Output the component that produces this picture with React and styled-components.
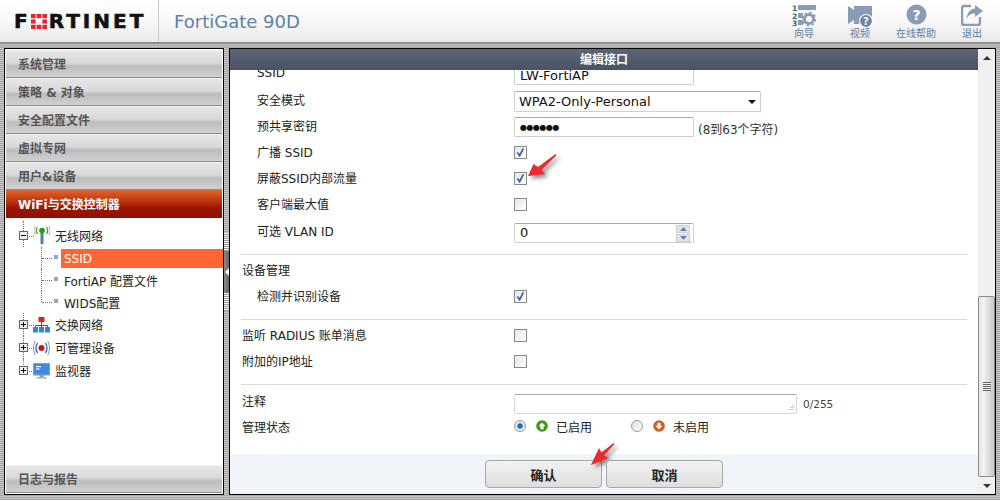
// App.jsx
import React from 'react';
import styled, { createGlobalStyle } from 'styled-components';

const GlobalStyle = createGlobalStyle`
  html, body {
    margin: 0;
    padding: 0;
    height: 500px;
    overflow: hidden;
    font-family: "DejaVu Sans", "Noto Sans CJK SC", sans-serif;
    font-size: 12px;
    color: #222;
  }
  * { box-sizing: border-box; }
`;

const NAV_ITEMS = ['系统管理', '策略 & 对象', '安全配置文件', '虚拟专网', '用户&设备'];

function WizardIcon() {
  return (
    <svg width="24" height="23" viewBox="0 0 24 23">
      <text x="0" y="7" fontSize="7.5" fontWeight="700" fill="#3f5f8c">1</text>
      <text x="0" y="14.5" fontSize="7.5" fontWeight="700" fill="#3f5f8c">2</text>
      <text x="0" y="22" fontSize="7.5" fontWeight="700" fill="#3f5f8c">3</text>
      <rect x="6" y="1" width="18" height="5" fill="#8b9bb6" />
      <rect x="6" y="9" width="5" height="5" fill="#8b9bb6" />
      <rect x="6" y="16" width="5" height="5" fill="#8b9bb6" />
      <circle cx="17" cy="15" r="4.6" fill="none" stroke="#8b9bb6" strokeWidth="3" />
      <circle cx="17" cy="15" r="6.6" fill="none" stroke="#8b9bb6" strokeWidth="1.6" strokeDasharray="2.4 2.8" />
    </svg>
  );
}

function VideoIcon() {
  return (
    <svg width="25" height="24" viewBox="0 0 25 24">
      <path d="M0 2 L6 6 V2 H24 V14 H6 V16 L0 20 Z" fill="#8b9bb6" />
      <path d="M6 14 h8 v6 h-8 Z" fill="#8b9bb6" />
      <circle cx="18" cy="17" r="6.5" fill="#6f83a3" stroke="#fff" strokeWidth="1.2" />
      <text x="18" y="21" textAnchor="middle" fontSize="10" fontWeight="700" fill="#fff">?</text>
    </svg>
  );
}

function HelpIcon() {
  return (
    <svg width="21" height="21" viewBox="0 0 21 21">
      <circle cx="10.5" cy="10.5" r="10" fill="#8b9bb6" />
      <text x="10.5" y="15.5" textAnchor="middle" fontSize="14" fontWeight="700" fill="#fff">?</text>
    </svg>
  );
}

function ExitIcon() {
  return (
    <svg width="22" height="22" viewBox="0 0 22 22">
      <path d="M10 2 H3 Q1 2 1 4 V19 Q1 21 3 21 H17 Q19 21 19 19 V13" fill="none" stroke="#8b9bb6" strokeWidth="2.4" />
      <path d="M14 1 L22 7 L14 13 V9.5 C10 9.5 7.5 11 5.5 15 C6 9 9 5 14 4.5 Z" fill="#8b9bb6" />
    </svg>
  );
}

function WifiIcon() {
  return (
    <svg width="16" height="18" viewBox="0 0 16 18">
      <rect x="6.5" y="7" width="3" height="11" fill="#4d7db0" />
      <circle cx="8" cy="4.5" r="2.8" fill="#1f9d1f" />
      <path d="M3.5 1 Q1 4.5 3.5 8 M12.5 1 Q15 4.5 12.5 8" fill="none" stroke="#5b7a2a" strokeWidth="1.1" />
      <path d="M1 0 Q-1.2 4.5 1 9 M15 0 Q17.2 4.5 15 9" fill="none" stroke="#9aa86a" strokeWidth="0.8" />
    </svg>
  );
}

function SwitchIcon() {
  return (
    <svg width="17" height="16" viewBox="0 0 17 16">
      <rect x="5.5" y="0" width="6" height="5" fill="#e02020" />
      <path d="M8.5 5 V9 M2.5 11 V8.5 H14.5 V11 M8.5 9 V11" fill="none" stroke="#555" />
      <rect x="0" y="10" width="5" height="5.5" fill="#2f86d8" />
      <rect x="6" y="10" width="5" height="5.5" fill="#2f86d8" />
      <rect x="12" y="10" width="5" height="5.5" fill="#2f86d8" />
    </svg>
  );
}

function ManagedIcon() {
  return (
    <svg width="17" height="16" viewBox="0 0 17 16">
      <circle cx="8.5" cy="8" r="3" fill="#d01020" />
      <path d="M4.5 3 Q1.5 8 4.5 13 M12.5 3 Q15.5 8 12.5 13" fill="none" stroke="#2a62b0" strokeWidth="1.3" />
      <path d="M2.2 1 Q-1.2 8 2.2 15 M14.8 1 Q18.2 8 14.8 15" fill="none" stroke="#6f9ad0" strokeWidth="1" />
    </svg>
  );
}

function MonitorIcon() {
  return (
    <svg width="17" height="16" viewBox="0 0 17 16">
      <rect x="0.5" y="0.5" width="16" height="11.5" fill="#3f8ae8" stroke="#8aa0b8" />
      <rect x="3" y="3" width="5" height="1.2" fill="#fff" />
      <rect x="3" y="5.4" width="3.4" height="1.2" fill="#fff" />
      <rect x="6.5" y="12" width="4" height="2" fill="#8a98a8" />
      <rect x="3.5" y="14" width="10" height="1.6" fill="#a9b4c0" />
    </svg>
  );
}

function UpCircle() {
  return (
    <svg width="12" height="12" viewBox="0 0 12 12">
      <circle cx="6" cy="6" r="5.8" fill="#3a9a12" />
      <path d="M6 2.4 L9.6 6.2 H7.6 V9.2 H4.4 V6.2 H2.4 Z" fill="#fff" />
    </svg>
  );
}

function DownCircle() {
  return (
    <svg width="12" height="12" viewBox="0 0 12 12">
      <circle cx="6" cy="6" r="5.8" fill="#e2551a" />
      <path d="M6 9.6 L9.6 5.8 H7.6 V2.8 H4.4 V5.8 H2.4 Z" fill="#fff" />
    </svg>
  );
}

function CheckMark() {
  return (
    <svg width="11" height="11" viewBox="0 0 11 11">
      <path d="M2.4 5.6 L4.6 8.6 L8.4 1.4" fill="none" stroke="#3a5aa0" strokeWidth="1.7" />
    </svg>
  );
}

function App() {
  return (
    <>
      <GlobalStyle />
      <Page>
        <Header>
          <LogoCell>
            <Logo>
              F
              <LogoMark viewBox="0 0 16 15">
                <rect x="0" y="0" width="4.6" height="4.2" fill="#e8262a" />
                <rect x="5.6" y="0" width="4.8" height="4.2" fill="#e8262a" />
                <rect x="11.4" y="0" width="4.6" height="4.2" fill="#e8262a" />
                <rect x="0" y="5.4" width="4.6" height="4.2" fill="#e8262a" />
                <rect x="11.4" y="5.4" width="4.6" height="4.2" fill="#e8262a" />
                <rect x="0" y="10.8" width="4.6" height="4.2" fill="#e8262a" />
                <rect x="5.6" y="10.8" width="4.8" height="4.2" fill="#e8262a" />
                <rect x="11.4" y="10.8" width="4.6" height="4.2" fill="#e8262a" />
              </LogoMark>
              RTINET
            </Logo>
          </LogoCell>
          <ModelName>FortiGate 90D</ModelName>
          <HeaderTools>
            <ToolItem><ToolIcon><WizardIcon /></ToolIcon>向导</ToolItem>
            <ToolItem><ToolIcon><VideoIcon /></ToolIcon>视频</ToolItem>
            <ToolItem><ToolIcon><HelpIcon /></ToolIcon>在线帮助</ToolItem>
            <ToolItem><ToolIcon><ExitIcon /></ToolIcon>退出</ToolItem>
          </HeaderTools>
        </Header>
        <Main>
          <SidePanel>
            {NAV_ITEMS.map((item) => (
              <NavItem key={item}>{item}</NavItem>
            ))}
            <NavActive>WiFi与交换控制器</NavActive>
            <Tree>
              <TreeRow $first>
                <Expander $open />
                <TreeIcon><WifiIcon /></TreeIcon>
                <TreeLabel>无线网络</TreeLabel>
              </TreeRow>
              <ChildRow>
                <Bullet />
                <ChildLabel $active>SSID</ChildLabel>
              </ChildRow>
              <ChildRow>
                <Bullet />
                <ChildLabel>FortiAP 配置文件</ChildLabel>
              </ChildRow>
              <ChildRow $last>
                <Bullet />
                <ChildLabel>WIDS配置</ChildLabel>
              </ChildRow>
              <TreeRow>
                <Expander />
                <TreeIcon><SwitchIcon /></TreeIcon>
                <TreeLabel>交换网络</TreeLabel>
              </TreeRow>
              <TreeRow>
                <Expander />
                <TreeIcon><ManagedIcon /></TreeIcon>
                <TreeLabel>可管理设备</TreeLabel>
              </TreeRow>
              <TreeRow $lastRoot>
                <Expander />
                <TreeIcon><MonitorIcon /></TreeIcon>
                <TreeLabel>监视器</TreeLabel>
              </TreeRow>
            </Tree>
            <NavItem $bottom>日志与报告</NavItem>
          </SidePanel>
          <Splitter>
            <SplitGrip />
            <SplitHandle>
              <svg width="4" height="8" viewBox="0 0 4 8"><path d="M4 0 V8 L0 4 Z" fill="#fff" /></svg>
            </SplitHandle>
            <SplitGrip />
          </Splitter>
          <Dialog>
            <DialogMain>
              <DialogTitle>编辑接口</DialogTitle>
              <FormBody>
                <FormInner>
                  <Row $indent>
                    <RowLabel $indent>SSID</RowLabel>
                    <TextBox>LW-FortiAP</TextBox>
                  </Row>
                  <Row $indent>
                    <RowLabel $indent>安全模式</RowLabel>
                    <SelectBox>
                      WPA2-Only-Personal
                      <svg width="8" height="4" viewBox="0 0 8 4"><path d="M0 0 H8 L4 4 Z" fill="#111" /></svg>
                    </SelectBox>
                  </Row>
                  <Row $indent>
                    <RowLabel $indent>预共享密钥</RowLabel>
                    <TextBox $dots>●●●●●●</TextBox>
                    <Hint>(8到63个字符)</Hint>
                  </Row>
                  <Row $indent>
                    <RowLabel $indent>广播 SSID</RowLabel>
                    <CheckBox><CheckMark /></CheckBox>
                  </Row>
                  <Row $indent>
                    <RowLabel $indent>屏蔽SSID内部流量</RowLabel>
                    <CheckBox><CheckMark /></CheckBox>
                    <ArrowOne width="30" height="24" viewBox="0 0 30 24">
                      <path d="M0 22 L5.5 10 L10 13 L27.5 0 L28.5 1 L13.5 16 L17 20 Z" fill="#f0282c" />
                    </ArrowOne>
                  </Row>
                  <Row $indent>
                    <RowLabel $indent>客户端最大值</RowLabel>
                    <CheckBox />
                  </Row>
                  <Row $indent $gap={1}>
                    <RowLabel $indent>可选 VLAN ID</RowLabel>
                    <TextBox $drop={5}>
                      0
                      <Spinner>
                        <SpinBtn><svg width="7" height="4" viewBox="0 0 7 4"><path d="M0 4 L3.5 0 L7 4 Z" fill="#6a7fb0" /></svg></SpinBtn>
                        <SpinBtn><svg width="7" height="4" viewBox="0 0 7 4"><path d="M0 0 H7 L3.5 4 Z" fill="#6a7fb0" /></svg></SpinBtn>
                      </Spinner>
                    </TextBox>
                  </Row>
                  <Divider $top={11} $bottom={1} />
                  <Row>
                    <RowLabel>设备管理</RowLabel>
                  </Row>
                  <Row $indent>
                    <RowLabel $indent>检测并识别设备</RowLabel>
                    <CheckBox><CheckMark /></CheckBox>
                  </Row>
                  <Divider $top={11} $bottom={1} />
                  <Row>
                    <RowLabel>监听 RADIUS 账单消息</RowLabel>
                    <CheckBox />
                  </Row>
                  <Row>
                    <RowLabel>附加的IP地址</RowLabel>
                    <CheckBox />
                  </Row>
                  <Divider $top={11} $bottom={2} />
                  <Row>
                    <RowLabel>注释</RowLabel>
                    <NoteBox>
                      <svg width="7" height="7" viewBox="0 0 7 7">
                        <path d="M6 1v1M4 3v1M6 3v1M2 5v1M4 5v1M6 5v1" stroke="#999" />
                      </svg>
                    </NoteBox>
                    <Counter>0/255</Counter>
                  </Row>
                  <Row>
                    <RowLabel>管理状态</RowLabel>
                    <RadioOption $width={117}>
                      <Radio $on />
                      <UpCircle />
                      <span>已启用</span>
                    </RadioOption>
                    <RadioOption>
                      <Radio />
                      <DownCircle />
                      <span>未启用</span>
                    </RadioOption>
                  </Row>
                </FormInner>
              </FormBody>
              <Footer>
                <FooterButton>
                  确认
                  <ArrowTwo width="25" height="24" viewBox="0 0 25 24">
                    <path d="M0 22 L8 5 L10.5 9.5 L22.5 0 L23.5 1 L13 12.5 L17.5 15 Z" fill="#f0282c" />
                  </ArrowTwo>
                </FooterButton>
                <FooterButton>取消</FooterButton>
              </Footer>
            </DialogMain>
            <ScrollBar>
              <ScrollEnd>
                <svg width="8" height="4" viewBox="0 0 8 4"><path d="M0 4 L4 0 L8 4 Z" fill="#333" /></svg>
              </ScrollEnd>
              <ScrollTrack>
                <ScrollThumb>
                  <ThumbGrip />
                </ScrollThumb>
              </ScrollTrack>
              <ScrollEnd>
                <svg width="8" height="4" viewBox="0 0 8 4"><path d="M0 0 H8 L4 4 Z" fill="#333" /></svg>
              </ScrollEnd>
            </ScrollBar>
          </Dialog>
        </Main>
      </Page>
    </>
  );
}

const Page = styled.div`
  width: 1000px;
  height: 500px;
  display: flex;
  flex-direction: column;
  background: repeating-linear-gradient(to bottom, #c4c4c4 0, #c4c4c4 1px, #a8a8a8 1px, #a8a8a8 2px);
`;

const Header = styled.div`
  height: 44px;
  display: flex;
  align-items: stretch;
  background: linear-gradient(to bottom, #ffffff 0%, #f8f8f8 50%, #e9e9e9 100%);
  border-bottom: 2px solid #8d8d8d;
`;

const LogoCell = styled.div`
  width: 159px;
  padding-left: 14px;
  display: flex;
  align-items: center;
  border-right: 1px solid #c8c8c8;
`;

const Logo = styled.div`
  display: flex;
  align-items: center;
  font-family: "DejaVu Sans", sans-serif;
  font-weight: 700;
  font-size: 20px;
  letter-spacing: 3px;
  -webkit-text-stroke: 0.6px #111;
  color: #111;
  line-height: 16px;
`;

const LogoMark = styled.svg`
  width: 16px;
  height: 15px;
  margin-right: 2px;
`;

const ModelName = styled.div`
  padding-left: 15px;
  display: flex;
  align-items: center;
  font-size: 18px;
  color: #5c83ab;
`;

const HeaderTools = styled.div`
  margin-left: auto;
  display: flex;
`;

const ToolItem = styled.div`
  width: 56px;
  display: flex;
  flex-direction: column;
  align-items: center;
  font-size: 10px;
  line-height: 13px;
  color: #5c7fa8;
`;

const ToolIcon = styled.div`
  height: 27px;
  padding-top: 4px;
  display: flex;
  align-items: flex-start;
  justify-content: center;
`;

const Main = styled.div`
  flex: 1;
  min-height: 0;
  display: flex;
  padding: 4px 4px 5px 4px;
`;

const SidePanel = styled.div`
  width: 220px;
  display: flex;
  flex-direction: column;
  background: #fff;
  border: 1px solid #000;
`;

const NavItem = styled.div`
  height: 28px;
  padding: 0 0 2px 12px;
  display: flex;
  align-items: center;
  flex-shrink: 0;
  font-size: 12px;
  font-weight: 700;
  color: #555;
  background: linear-gradient(to bottom, #e6e6e6 0%, #d9d9d9 45%, #bdbdbd 58%, #d0d0d0 100%);
  border-bottom: 1px solid #8c8c8c;
  border-top: 1px solid #f0f0f0;
  margin: ${(p) => (p.$bottom ? 'auto 1px 1px' : '0 1px')};

  &:first-child {
    margin-top: 1px;
  }
`;

const NavActive = styled.div`
  height: 28px;
  margin: 0 1px;
  padding: 0 0 2px 12px;
  display: flex;
  align-items: center;
  flex-shrink: 0;
  font-size: 12px;
  font-weight: 700;
  color: #fff;
  background: linear-gradient(to bottom, #e0652e 0%, #c23a12 35%, #9c1500 65%, #8c1000 100%);
`;

const Tree = styled.div`
  padding-top: 6px;
  display: flex;
  flex-direction: column;
`;

const TreeRow = styled.div`
  position: relative;
  height: 23px;
  padding: ${(p) => (p.$first ? '0 0 1px 14px' : '0 0 0 14px')};
  display: flex;
  align-items: center;

  &::before {
    content: '';
    position: absolute;
    left: 18px;
    top: ${(p) => (p.$first ? '-3px' : '0')};
    bottom: ${(p) => (p.$lastRoot ? '50%' : '0')};
    border-left: 1px dotted #777;
  }

  &::after {
    content: '';
    position: absolute;
    left: 24px;
    top: 50%;
    width: 5px;
    border-top: 1px dotted #777;
  }
`;

const Expander = styled.span`
  position: relative;
  z-index: 1;
  width: 9px;
  height: 9px;
  flex-shrink: 0;
  border: 1px solid #666;
  background: #eee;

  &::before {
    content: '';
    position: absolute;
    left: 1px;
    top: 3px;
    width: 5px;
    height: 1px;
    background: #111;
  }

  &::after {
    content: '';
    display: ${(p) => (p.$open ? 'none' : 'block')};
    position: absolute;
    left: 3px;
    top: 1px;
    width: 1px;
    height: 5px;
    background: #111;
  }
`;

const TreeIcon = styled.span`
  width: 17px;
  height: 18px;
  margin-left: 5px;
  display: flex;
  align-items: center;
  justify-content: center;
`;

const TreeLabel = styled.span`
  margin-left: 5px;
  font-size: 12px;
  color: #222;
`;

const ChildRow = styled.div`
  position: relative;
  height: 22px;
  padding-left: 49px;
  display: flex;
  align-items: center;

  &::before {
    content: '';
    position: absolute;
    left: 36px;
    top: 0;
    height: ${(p) => (p.$last ? '50%' : '100%')};
    border-left: 1px dotted #777;
  }

  &::after {
    content: '';
    position: absolute;
    left: 37px;
    top: 50%;
    width: 10px;
    border-top: 1px dotted #777;
  }
`;

const Bullet = styled.span`
  width: 4px;
  height: 4px;
  margin-top: -3px;
  background: #9aa3bb;
  flex-shrink: 0;
`;

const ChildLabel = styled.span`
  margin: 1px 0 0 3px;
  flex: 1;
  height: 19px;
  padding-left: 3px;
  display: flex;
  align-items: center;
  font-size: 12px;
  color: ${(p) => (p.$active ? '#fff' : '#222')};
  background: ${(p) => (p.$active ? '#ff6633' : 'transparent')};
`;

const Splitter = styled.div`
  width: 5px;
  display: flex;
  flex-direction: column;
  justify-content: center;
  align-items: center;
`;

const SplitGrip = styled.div`
  width: 5px;
  height: 18px;
  background: repeating-linear-gradient(to bottom, #f4f4f4 0, #f4f4f4 1px, #999 1px, #999 2px);
`;

const SplitHandle = styled.div`
  width: 5px;
  height: 42px;
  background: linear-gradient(to right, #8a8a8a, #666);
  display: flex;
  align-items: center;
  justify-content: center;
`;

const Dialog = styled.div`
  flex: 1;
  min-width: 0;
  display: flex;
  background: #fff;
  border: 1px solid #000;
`;

const DialogMain = styled.div`
  flex: 1;
  min-width: 0;
  display: flex;
  flex-direction: column;
`;

const DialogTitle = styled.div`
  height: 21px;
  flex-shrink: 0;
  padding-bottom: 2px;
  display: flex;
  align-items: center;
  justify-content: center;
  font-size: 12px;
  font-weight: 700;
  color: #fff;
  background: linear-gradient(to bottom, #5c6679 0%, #4a5263 100%);
`;

const FormBody = styled.div`
  flex: 1;
  min-height: 0;
  overflow: hidden;
`;

const FormInner = styled.div`
  margin-top: -10px;
  display: flex;
  flex-direction: column;
`;

const Row = styled.div`
  position: relative;
  height: 26px;
  margin-top: ${(p) => p.$gap || 0}px;
  padding-left: ${(p) => (p.$indent ? 27 : 12)}px;
  display: flex;
  align-items: center;
  flex-shrink: 0;
`;

const RowLabel = styled.div`
  width: ${(p) => (p.$indent ? 257 : 272)}px;
  flex-shrink: 0;
  white-space: nowrap;
  font-size: 12px;
  color: #222;
`;

const TextBox = styled.div`
  position: relative;
  width: 180px;
  height: 20px;
  margin-top: ${(p) => p.$drop || 4}px;
  padding-left: 5px;
  display: flex;
  align-items: center;
  flex-shrink: 0;
  background: #fff;
  border: 1px solid #d0d0d0;
  border-top-color: #a8a8a8;
  border-radius: 2px;
  font-size: ${(p) => (p.$dots ? '8px' : '13px')};
  letter-spacing: ${(p) => (p.$dots ? '-0.5px' : '0')};
  color: #111;
`;

const SelectBox = styled.div`
  width: 247px;
  height: 21px;
  margin-top: 4px;
  padding: 1px 4px 0;
  display: flex;
  align-items: center;
  justify-content: space-between;
  background: #fff;
  border: 1px solid #d0d0d0;
  border-top-color: #a8a8a8;
  border-radius: 2px;
  font-size: 13px;
  color: #111;
`;

const Hint = styled.span`
  margin: 6px 0 0 4px;
  white-space: nowrap;
  font-size: 12px;
  color: #333;
`;

const CheckBox = styled.div`
  width: 13px;
  height: 13px;
  margin-top: 2px;
  display: flex;
  align-items: center;
  justify-content: center;
  background: linear-gradient(135deg, #e6e6e6, #fff);
  border: 1px solid #8a8a8a;
`;

const ArrowOne = styled.svg`
  position: absolute;
  left: 298px;
  top: -10px;
  filter: drop-shadow(3px 3px 2px rgba(0, 0, 0, 0.45));
`;

const ArrowTwo = styled.svg`
  position: absolute;
  left: 105px;
  top: -18px;
  filter: drop-shadow(3px 3px 2px rgba(0, 0, 0, 0.45));
`;

const Spinner = styled.div`
  position: absolute;
  right: 3px;
  top: 1px;
  display: flex;
  flex-direction: column;
  gap: 1px;
`;

const SpinBtn = styled.div`
  width: 14px;
  height: 8px;
  display: flex;
  align-items: center;
  justify-content: center;
  background: #e4e4e4;
  border: 1px solid #cfcfcf;
`;

const Divider = styled.div`
  height: 1px;
  margin: ${(p) => p.$top}px 11px ${(p) => p.$bottom}px 11px;
  background: #d8d8d8;
  flex-shrink: 0;
`;

const NoteBox = styled.div`
  width: 283px;
  height: 20px;
  margin-top: 8px;
  padding: 0 2px 2px 0;
  display: flex;
  align-items: flex-end;
  justify-content: flex-end;
  background: #fff;
  border: 1px solid #d8d8d8;
  border-top-color: #a8a8a8;
  border-radius: 2px;
`;

const Counter = styled.span`
  margin: 8px 0 0 6px;
  font-size: 10.5px;
  color: #444;
`;

const RadioOption = styled.div`
  width: ${(p) => (p.$width ? `${p.$width}px` : 'auto')};
  display: flex;
  align-items: center;
  gap: 8px;
  font-size: 12px;
  color: #222;
`;

const Radio = styled.span`
  width: 12px;
  height: 12px;
  margin-right: 2px;
  border-radius: 50%;
  border: 1px solid #999;
  background: ${(p) =>
    p.$on ? 'radial-gradient(circle, #1a6fae 0, #1a6fae 30%, #dce4ea 45%, #eee 100%)' : 'linear-gradient(135deg, #ddd, #fff)'};
`;

const ScrollBar = styled.div`
  width: 17px;
  display: flex;
  flex-direction: column;
  flex-shrink: 0;
  background: #f0f0f0;
`;

const ScrollEnd = styled.div`
  height: 17px;
  display: flex;
  align-items: center;
  justify-content: center;
  flex-shrink: 0;
`;

const ScrollTrack = styled.div`
  flex: 1;
  min-height: 0;
  padding-top: 230px;
  display: flex;
  flex-direction: column;
`;

const ScrollThumb = styled.div`
  flex: 1;
  display: flex;
  align-items: center;
  justify-content: center;
  background: linear-gradient(to right, #e4e4e4 0%, #f2f2f2 30%, #c8c8c8 100%);
  border: 1px solid #8c8c8c;
  border-radius: 2px;
`;

const ThumbGrip = styled.div`
  width: 8px;
  height: 9px;
  background: repeating-linear-gradient(to bottom, #666 0, #666 1px, #eee 1px, #eee 2px);
`;

const Footer = styled.div`
  height: 40px;
  flex-shrink: 0;
  display: flex;
  align-items: flex-start;
  justify-content: center;
  gap: 4px;
  padding-top: 6px;
  background: #f0f3f8;
`;

const FooterButton = styled.div`
  position: relative;
  width: 117px;
  height: 28px;
  display: flex;
  align-items: center;
  justify-content: center;
  font-size: 13px;
  font-weight: 700;
  color: #222;
  background: linear-gradient(to bottom, #f2f2f2 0%, #dedede 100%);
  border: 1px solid #a8a8a8;
  border-radius: 4px;
`;

export default App;
